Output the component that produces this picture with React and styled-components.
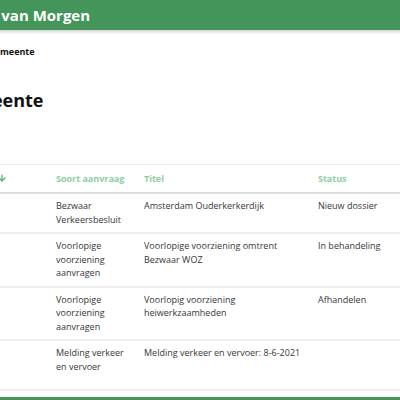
import styled, { createGlobalStyle } from "styled-components";
import { ArrowDown } from "lucide-react";

const aanvragen = [
    { datum: "12-4-2021", soort: "Bezwaar Verkeersbesluit", titel: "Amsterdam Ouderkerkerdijk", status: "Nieuw dossier" },
    { datum: "3-5-2021", soort: "Voorlopige voorziening aanvragen", titel: "Voorlopige voorziening omtrent Bezwaar WOZ", status: "In behandeling" },
    { datum: "20-5-2021", soort: "Voorlopige voorziening aanvragen", titel: "Voorlopig voorziening heiwerkzaamheden", status: "Afhandelen" },
    { datum: "8-6-2021", soort: "Melding verkeer en vervoer", titel: "Melding verkeer en vervoer: 8-6-2021", status: "", tall: true },
];

export default function App() {
    return (
        <>
            <GlobalStyle />
            <Viewport>
                <Page>
                    <Header>
                        <Logo>Gemeente van Morgen</Logo>
                    </Header>
                    <Main>
                        <Breadcrumb>
                            <Crumb>Home</Crumb>
                            <Separator>/</Separator>
                            <Crumb>Mijn gemeente</Crumb>
                        </Breadcrumb>
                        <Title>Mijn gemeente</Title>
                        <Table>
                            <colgroup>
                                <col style={{ width: 139 }} />
                                <col style={{ width: 88 }} />
                                <col style={{ width: 174 }} />
                                <col />
                            </colgroup>
                            <thead>
                                <tr>
                                    <Th $first>
                                        <SortLabel>Aangevraagd op <ArrowDown size={10} strokeWidth={3} /></SortLabel>
                                    </Th>
                                    <Th>Soort aanvraag</Th>
                                    <Th>Titel</Th>
                                    <Th>Status</Th>
                                </tr>
                            </thead>
                            <tbody>
                                {aanvragen.map((a, index) => (
                                    <Row key={index} $tall={a.tall}>
                                        <Td>{a.datum}</Td>
                                        <Td>{a.soort}</Td>
                                        <Td>{a.titel}</Td>
                                        <Td>{a.status}</Td>
                                    </Row>
                                ))}
                            </tbody>
                        </Table>
                    </Main>
                    <Footer />
                </Page>
            </Viewport>
        </>
    )
}

const GlobalStyle = createGlobalStyle`
* { box-sizing: border-box; }
body {
    margin: 0;
    background: #fff;
    font-family: "Open Sans", "Noto Sans", sans-serif;
    color: #363636;
}
`
const Viewport = styled.div`
width: 400px;
height: 400px;
overflow: hidden;
`
const Page = styled.div`
width: 620px;
margin-left: -100px;
`
const Header = styled.header`
height: 30px;
background-color: #43955a;
display: flex;
align-items: center;
padding-left: 20px;
box-shadow: 0 2px 3px rgba(0, 0, 0, .18);
`
const Logo = styled.div`
font-weight: 700;
font-size: 15px;
color: #fff;
`
const Main = styled.main`
padding: 15px 0 0 9px;
`
const Breadcrumb = styled.nav`
display: flex;
font-size: 9px;
font-weight: 700;
line-height: 13.5px;
color: #111;
`
const Crumb = styled.span``
const Separator = styled.span`
margin: 0 14px;
`
const Title = styled.h1`
margin: 30px 0 0;
font-size: 18px;
font-weight: 700;
line-height: 22px;
color: #111;
`
const Table = styled.table`
margin-top: 53px;
width: 611px;
table-layout: fixed;
border-collapse: collapse;
font-size: 9px;
line-height: 13.5px;
`
const Th = styled.th`
text-align: left;
font-weight: 700;
color: #8dcf9f;
padding: 7px 8px 7px ${props => props.$first ? "13px" : "8px"};
border-top: 1px solid #eee;
border-bottom: 2px solid #dedede;
`
const SortLabel = styled.span`
display: inline-flex;
align-items: center;
gap: 3px;
svg { color: #5aa96f; }
`
const Row = styled.tr`
height: ${props => props.$tall ? "50px" : "auto"};
border-bottom: 2px solid #eee;
`
const Td = styled.td`
vertical-align: top;
padding: 5px 8px 6px;
`
const Footer = styled.footer`
margin-top: 6px;
height: 10px;
background-color: #43955a;
`
